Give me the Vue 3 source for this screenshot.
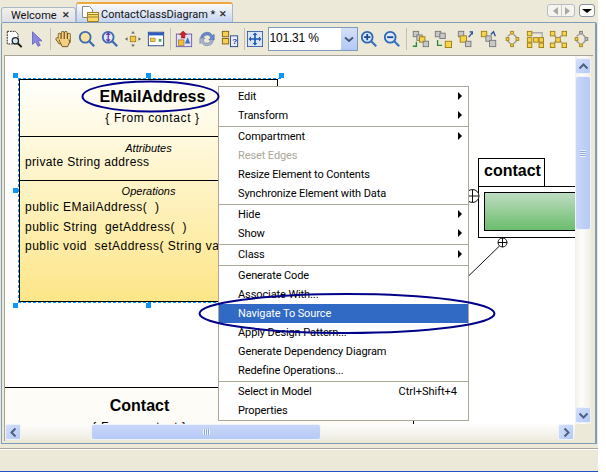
<template>
  <div class="shot">
    <div class="app">
      <div class="tabbar">
        <div class="tab">
          <span>Welcome</span>
          <span class="tab-x">✕</span>
        </div>
        <div class="tab active">
          <svg class="tab-icon" width="20" height="18" viewBox="0 0 20 18">
            <path d="M1.5 1.5h7l3 3v8h-10z" fill="#fff" stroke="#8a8a8a" />
            <path d="M6.5 7.5h11v9h-11z" fill="#f8d860" stroke="#a08020" />
            <path d="M6.5 7.5h11v2h-11zM7 12h10" fill="#fcf0b0" stroke="#a08020" />
          </svg>
          <span>ContactClassDiagram *</span>
          <span class="tab-x">✕</span>
        </div>
        <div class="tab-tools">
          <div class="nav-btn">
            <i class="tri-left"></i>
            <b></b>
            <i class="tri-right"></i>
          </div>
          <div class="drop-btn"><i></i></div>
        </div>
      </div>

      <div class="panel">
        <div class="toolbar">
          <svg class="tool" viewBox="0 0 20 20">
            <path d="M2.500 1.500h9l3 3v11h-12z" fill="#fff" stroke="#111" stroke-dasharray="2 1" />
            <circle cx="11.500" cy="12" r="3.500" fill="#cfe4f7" stroke="#222" stroke-width="1.400" />
            <path d="M14.500 15l4 4" stroke="#111" stroke-width="2" />
          </svg>
          <svg class="tool" viewBox="0 0 20 20">
            <path d="M5 2v14l3.500-3 2.500 5 2.500-1-2.500-5h4.500z" fill="#8c88e0" stroke="#6a66c0" />
          </svg>
          <span class="tsep first"></span>
          <svg class="tool" viewBox="0 0 20 20">
            <g fill="none" stroke-linecap="round">
              <g stroke="#6a4a18" stroke-width="3.800">
                <path d="M5 5v7M8.500 3v8M12 3v8M15.500 5v8M2.500 10l3 4" />
              </g>
              <g stroke="#f4d083" stroke-width="2.200">
                <path d="M5 5v7M8.500 3v8M12 3v8M15.500 5v8M2.500 10l3 4" />
              </g>
            </g>
            <path d="M4.500 11h11.500v3l-2 4.500H8z" fill="#f4d083" stroke="#6a4a18" />
            <path d="M5 10h10v3H6z" fill="#f4d083" />
          </svg>
          <svg class="tool" viewBox="0 0 20 20">
            <circle cx="8" cy="8" r="6" fill="#f8e0a0" stroke="#3a6ab0" stroke-width="2" />
            <path d="M12.500 12.500l5.500 5.500" stroke="#3a6ab0" stroke-width="2.500" />
          </svg>
          <svg class="tool" viewBox="0 0 20 20">
            <circle cx="8" cy="8" r="6" fill="#dfe8fa" stroke="#3a6ab0" stroke-width="2" />
            <path d="M8 3.500v9M6 5.500l2-2 2 2M6 10.500l2 2 2-2" fill="none" stroke="#6a2aa0" stroke-width="1.300" />
            <path d="M12.500 12.500l5.500 5.500" stroke="#3a6ab0" stroke-width="2.500" />
          </svg>
          <svg class="tool" viewBox="0 0 20 20">
            <rect x="7" y="7" width="6" height="6" fill="#f5c842" stroke="#a08020" />
            <path d="M10 1l2 3H8zM10 19l-2-3h4zM1 10l3-2v4zM19 10l-3 2V8z" fill="#666" />
          </svg>
          <svg class="tool" viewBox="0 0 20 20">
            <rect x="1.500" y="2.500" width="17" height="15" fill="#fff" stroke="#26408c" />
            <rect x="2" y="3" width="16" height="3" fill="#2a5ac0" />
            <rect x="4" y="9" width="5" height="4" fill="#f5d040" stroke="#806010" stroke-width=".6" />
            <rect x="13" y="10" width="3" height="3" fill="#50a050" />
          </svg>
          <span class="tsep"></span>
          <svg class="tool" viewBox="0 0 20 20">
            <rect x="1.500" y="4.500" width="17" height="14" fill="#e6e0f5" stroke="#6a58b0" />
            <path d="M9 1l4 4h-2v4H7V5H5z" fill="#d02020" stroke="#801010" stroke-width=".5" />
            <rect x="4" y="11" width="6" height="6" fill="#f0c030" stroke="#806010" stroke-width=".6" />
            <path d="M14 8l3 7h-6z" fill="#3a70c8" />
          </svg>
          <svg class="tool" viewBox="0 0 20 20">
            <path d="M3 9a7 7 0 0 1 13-3l2-1v6h-6l2-2a4 4 0 0 0-8 1z" fill="#6a8ad0" stroke="#3a5a9a" stroke-width=".6" />
            <path d="M17 11a7 7 0 0 1-13 3l-2 1V9h6l-2 2a4 4 0 0 0 8-1z" fill="#a8b4cc" stroke="#707c9c" stroke-width=".6" />
          </svg>
          <svg class="tool" viewBox="0 0 20 20">
            <rect x="1.500" y="1.500" width="7" height="6" fill="#f3d050" stroke="#806010" />
            <rect x="1.500" y="9.500" width="7" height="6" fill="#f3d050" stroke="#806010" />
            <rect x="10.500" y="6.500" width="8" height="12" fill="#e8eefc" stroke="#26408c" />
            <text class="help-mark" x="12.500" y="16">?</text>
          </svg>
          <span class="tsep"></span>
          <svg class="tool fit" viewBox="0 0 20 20">
            <rect x=".5" y=".5" width="19" height="19" fill="#dbe6fa" stroke="#26509c" />
            <path d="M10 2l3 3h-2v4h4V7l3 3-3 3v-2h-4v4h2l-3 3-3-3h2v-4H5v2l-3-3 3-3v2h4V5H7z" fill="#1a58b0" />
          </svg>
          <div class="combo">
            <span class="combo-value">101.31 %</span>
            <span class="combo-btn"><svg width="10" height="7" viewBox="0 0 10 7"><path d="M1 1.500l4 3.500 4-3.500" fill="none" stroke="#44587c" stroke-width="2" /></svg></span>
          </div>
          <svg class="tool" viewBox="0 0 20 20">
            <circle cx="8" cy="8" r="6" fill="#dce8fb" stroke="#2a68b8" stroke-width="2" />
            <path d="M4.500 8h7M8 4.500v7" stroke="#1a4a9a" stroke-width="2" />
            <path d="M12.500 12.500l5.500 5.500" stroke="#3a74c0" stroke-width="2.500" />
          </svg>
          <svg class="tool" viewBox="0 0 20 20">
            <circle cx="8" cy="8" r="6" fill="#dce8fb" stroke="#2a68b8" stroke-width="2" />
            <path d="M4.500 8h7" stroke="#1a4a9a" stroke-width="2" />
            <path d="M12.500 12.500l5.500 5.500" stroke="#3a74c0" stroke-width="2.500" />
          </svg>
          <span class="tsep"></span>
          <svg v-for="(icon, i) in layoutIcons" :key="i" class="tool" viewBox="0 0 20 20">
            <path v-if="icon.arrow" :d="icon.arrow" fill="none" :stroke="icon.arrowColor" stroke-width="1.500" />
            <rect
              v-for="(b, j) in icon.boxes"
              :key="j"
              :x="b[0] + 0.5"
              :y="b[1] + 0.5"
              :width="b[2]"
              :height="b[2]"
              :fill="b[3]"
              :stroke="b[3] === '#f6d44c' ? '#a07c10' : '#777'"
            />
          </svg>
        </div>

        <div class="workspace">
          <div class="canvas">
            <div class="class-box">
              <div class="class-head">
                <div class="class-name">EMailAddress</div>
                <div class="class-from">{ From contact }</div>
              </div>
              <div class="class-attrs">
                <div class="comp-title">Attributes</div>
                <div class="member attr">private String address</div>
              </div>
              <div class="class-ops">
                <div class="comp-title">Operations</div>
                <div class="member">public EMailAddress(&nbsp; )</div>
                <div class="member">public String&nbsp; getAddress(&nbsp; )</div>
                <div class="member">public void&nbsp; setAddress( String value )</div>
              </div>
            </div>
            <div class="selection"></div>
            <span v-for="(h, i) in handles" :key="i" class="handle" :style="{ left: h[0] + 'px', top: h[1] + 'px' }"></span>

            <div class="contact-box">
              <div class="contact-name">Contact</div>
              <div class="class-from">{ From contact }</div>
            </div>

            <div class="package">
              <div class="package-tab">contact</div>
              <div class="package-body"><div class="package-fill"></div></div>
            </div>
            <svg class="wires" width="570" height="368" viewBox="0 0 570 368">
              <circle cx="467.500" cy="140" r="6.500" fill="#fff" stroke="#111" />
              <path d="M461 140h13M467.500 133.500v13" fill="none" stroke="#111" />
              <circle cx="497.500" cy="186.500" r="4.500" fill="#fff" stroke="#111" />
              <path d="M493 186.500h9M497.500 182v9M494.500 190l-32 31" fill="none" stroke="#111" />
            </svg>
          </div>

          <div class="vscroll">
            <span class="sb-btn"><svg width="11" height="7" viewBox="0 0 11 7"><path d="M1.500 5.500l4-4 4 4" fill="none" stroke="#4d6185" stroke-width="2" /></svg></span>
            <span class="v-thumb"><i></i></span>
            <span class="sb-btn down"><svg width="11" height="7" viewBox="0 0 11 7"><path d="M1.500 1.500l4 4 4-4" fill="none" stroke="#4d6185" stroke-width="2" /></svg></span>
          </div>
          <div class="hscroll">
            <span class="sb-btn"><svg width="7" height="11" viewBox="0 0 7 11"><path d="M5.500 1.500l-4 4 4 4" fill="none" stroke="#4d6185" stroke-width="2" /></svg></span>
            <span class="h-thumb"><i></i></span>
            <span class="sb-btn right"><svg width="7" height="11" viewBox="0 0 7 11"><path d="M1.500 1.500l4 4-4 4" fill="none" stroke="#4d6185" stroke-width="2" /></svg></span>
          </div>
          <div class="corner"></div>
        </div>
      </div>

      <div class="statusbar"></div>

      <div class="menu">
        <template v-for="(group, g) in menuGroups" :key="g">
          <div v-if="g > 0" class="menu-sep"></div>
          <div
            v-for="item in group"
            :key="item.label"
            class="menu-item"
            :class="{ disabled: item.disabled, selected: item.selected }"
          >
            <span>{{ item.label }}</span>
            <span v-if="item.shortcut" class="shortcut">{{ item.shortcut }}</span>
            <i v-if="item.sub" class="submenu-arrow"></i>
          </div>
        </template>
      </div>

      <svg class="marks" width="598" height="472" viewBox="0 0 598 472">
        <ellipse cx="150.500" cy="96.500" rx="68" ry="15" />
        <ellipse cx="347" cy="313.500" rx="147.500" ry="19.500" />
      </svg>
    </div>
  </div>
</template>

<script setup>
const menuGroups = [
  [
    { label: 'Edit', sub: true },
    { label: 'Transform', sub: true },
  ],
  [
    { label: 'Compartment', sub: true },
    { label: 'Reset Edges', disabled: true },
    { label: 'Resize Element to Contents' },
    { label: 'Synchronize Element with Data' },
  ],
  [
    { label: 'Hide', sub: true },
    { label: 'Show', sub: true },
  ],
  [{ label: 'Class', sub: true }],
  [
    { label: 'Generate Code' },
    { label: 'Associate With...' },
    { label: 'Navigate To Source', selected: true },
    { label: 'Apply Design Pattern...' },
    { label: 'Generate Dependency Diagram' },
    { label: 'Redefine Operations...' },
  ],
  [
    { label: 'Select in Model', shortcut: 'Ctrl+Shift+4' },
    { label: 'Properties' },
  ],
]

// handles are relative to the canvas
const handles = [
  [8, 17],
  [141, 17],
  [274, 17],
  [8, 132],
  [8, 247],
  [141, 247],
]

const Y = '#f6d44c'
const G = '#c8c8c8'
const layoutIcons = [
  { boxes: [[2, 1, 6, G], [6, 5, 6, G], [9, 7, 6, Y], [13, 12, 6, G]], arrow: 'M2 18h4V13', arrowColor: '#2c8a3c' },
  { boxes: [[1, 1, 6, G], [6, 3, 6, G], [12, 12, 7, Y]], arrow: 'M4 11v6h5', arrowColor: '#2c8a3c' },
  { boxes: [[1, 1, 6, G], [3, 6, 7, Y], [9, 12, 6, G]], arrow: 'M13 8l4-5M14 2h3v3', arrowColor: '#2050a0' },
  { boxes: [[1, 1, 6, Y], [6, 6, 6, G], [10, 11, 7, G]], arrow: 'M12 5l3-3 2 5', arrowColor: '#2050a0' },
  { boxes: [[8, 1, 3, Y], [3, 8, 3, Y], [14, 8, 3, Y], [8, 15, 3, Y]], arrow: 'M8 5L5 7M12 5l3 3M5 12l3 3M15 12l-3 3', arrowColor: '#999' },
  { boxes: [[1, 1, 5, Y], [1, 8, 5, Y], [1, 14, 5, Y], [8, 8, 5, Y], [14, 8, 5, Y], [14, 14, 5, Y]], arrow: 'M3 3h15v15', arrowColor: '#aaa' },
  { boxes: [[1, 1, 5, Y], [14, 1, 5, Y], [7, 8, 5, Y], [1, 14, 5, Y], [14, 14, 5, Y]], arrow: 'M6 6l2 2M14 6l-2 2M6 14l2-2M14 14l-2-2', arrowColor: '#999' },
  { boxes: [[8, 1, 3, G], [3, 8, 3, Y], [14, 8, 3, G], [8, 15, 3, Y]], arrow: 'M8 5L5 7M12 5l3 3M5 12l3 3M15 12l-3 3', arrowColor: '#999' },
]
</script>

<style>
html,
body {
  margin: 0;
  background: #fff;
}
</style>

<style scoped>
.shot {
  width: 606px;
  height: 472px;
  overflow: hidden;
  background: #fff;
}

.app {
  position: relative;
  width: 598px;
  height: 472px;
  background: #ece9d8;
  display: flex;
  flex-direction: column;
  font-family: "Roboto", "Noto Sans", sans-serif;
  font-size: 11px;
  color: #000;
  overflow: hidden;
}

.tabbar {
  height: 22px;
  display: flex;
  align-items: flex-end;
  padding-left: 1px;
  flex-shrink: 0;
}

.tab {
  width: 75px;
  height: 15px;
  box-sizing: border-box;
  display: flex;
  align-items: center;
  padding: 0 5px 0 9px;
  justify-content: space-between;
  border: 1px solid #a9b7c9;
  border-bottom: 0;
  border-radius: 3px 3px 0 0;
  background: linear-gradient(#f2f1ea, #dcdfe8);
  color: #111;
  white-space: nowrap;
}

.tab.active {
  width: 157px;
  height: 20px;
  padding: 2px 5px 0 4px;
  border-top: 2px solid #f0a83c;
  background: linear-gradient(#fbfbf8, #c4d4f3);
  justify-content: flex-start;
}

.tab.active .tab-x {
  margin-left: auto;
}

.tab-icon {
  flex-shrink: 0;
}

.tab-x {
  font-size: 9px;
  color: #333;
  font-weight: 700;
}

.tab-tools {
  margin-left: auto;
  display: flex;
  gap: 4px;
  align-self: flex-start;
  padding: 4px 3px 0 0;
}

.nav-btn,
.drop-btn {
  height: 13px;
  box-sizing: border-box;
  border: 1px solid #b8bcc4;
  border-radius: 3px;
  background: #f5f4ee;
  display: flex;
  align-items: center;
  justify-content: center;
}

.nav-btn {
  width: 28px;
  gap: 3px;
}

.nav-btn b {
  width: 1px;
  height: 11px;
  background: #c8c8c8;
}

.tri-left {
  border: 4px solid transparent;
  border-left: 0;
  border-right: 5px solid #a8a8a0;
}

.tri-right {
  border: 4px solid transparent;
  border-right: 0;
  border-left: 5px solid #a8a8a0;
}

.drop-btn {
  width: 16px;
  background: #fbfbf8;
  border-color: #8c94a0;
}

.drop-btn i {
  border: 4px solid transparent;
  border-bottom: 0;
  border-top: 4px solid #000;
  border-left-width: 5px;
  border-right-width: 5px;
}

.panel {
  margin: 0 1px;
  width: 596px;
  height: 422px;
  box-sizing: border-box;
  border: 1px solid #7f9db9;
  border-right-width: 2px;
  border-radius: 2px 2px 0 0;
  padding: 0 3px 2px 2px;
  display: flex;
  flex-direction: column;
  flex-shrink: 0;
}

.toolbar {
  height: 32px;
  display: flex;
  align-items: center;
  flex-shrink: 0;
  margin-left: -1.500px;
}

.tool {
  width: 18px;
  height: 18px;
  margin: 0 2.500px;
  flex-shrink: 0;
}

.tool.fit {
  width: 16px;
  height: 16px;
  margin: 0 3.500px 0 0.500px;
}

.help-mark {
  font-size: 9px;
  font-weight: 700;
  fill: #26408c;
  font-family: "Liberation Sans", sans-serif;
}

.tsep {
  width: 1px;
  height: 22px;
  background: #c4c1b2;
  margin: 0 2px;
  flex-shrink: 0;
}

.tsep.first {
  margin-left: 1px;
}

.combo {
  width: 90px;
  height: 24px;
  box-sizing: border-box;
  margin-left: 1px;
  border: 1px solid #7f9db9;
  background: #fff;
  display: flex;
  align-items: stretch;
  flex-shrink: 0;
  font-family: "Liberation Sans", sans-serif;
  font-size: 12px;
  letter-spacing: -0.200px;
}

.combo-value {
  flex: 1;
  padding-left: 1px;
  line-height: 21px;
}

.combo-btn {
  width: 16px;
  background: linear-gradient(#d4e0fa, #b2c8f6);
  display: flex;
  align-items: center;
  justify-content: center;
}

.workspace {
  flex: 1;
  display: grid;
  grid-template-columns: 570px 16px;
  grid-template-rows: 368px 16px;
  border-top: 1px solid #a7a59a;
  border-left: 1px solid #a7a59a;
  min-height: 0;
  width: 588px;
}

.canvas {
  position: relative;
  background: #fff;
  overflow: hidden;
}

.class-box {
  position: absolute;
  left: 14px;
  top: 23px;
  width: 259px;
  height: 223px;
  box-sizing: border-box;
  border: 1px solid #000;
  background: linear-gradient(#fffffc, #fde688);
  font-family: "Liberation Sans", sans-serif;
  font-size: 12px;
}

.selection {
  position: absolute;
  left: 13px;
  top: 22px;
  width: 263px;
  height: 225px;
  box-sizing: border-box;
  border: 1px dashed #0a96fa;
  border-right: 0;
}

.class-head {
  height: 57px;
  box-sizing: border-box;
  border-bottom: 1px solid #000;
  text-align: center;
  padding: 7px 0 0 8px;
}

.class-name {
  font-size: 16px;
  font-weight: 700;
  line-height: 19px;
}

.class-from {
  font-size: 12px;
  line-height: 14px;
  letter-spacing: 0.600px;
  margin-top: 5px;
}

.class-attrs {
  height: 44px;
  box-sizing: border-box;
  border-bottom: 1px solid #000;
  padding: 5px 5px 0;
}

.class-ops {
  padding: 4px 5px 0;
}

.comp-title {
  font-size: 11px;
  font-style: italic;
  text-align: center;
  line-height: 13px;
}

.member {
  line-height: 19.500px;
  letter-spacing: 0.480px;
  white-space: nowrap;
  overflow: hidden;
}

.member.attr {
  margin-top: -2px;
  letter-spacing: 0.350px;
}

.handle {
  position: absolute;
  width: 5px;
  height: 5px;
  background: #0a96fa;
}

.contact-box {
  position: absolute;
  left: 0;
  top: 331px;
  width: 409px;
  height: 60px;
  border-top: 1px solid #000;
  border-right: 1px solid #000;
  background: #fdfcf6;
  font-family: "Liberation Sans", sans-serif;
  text-align: center;
  padding: 9px 139px 0 0;
  box-sizing: border-box;
}

.contact-name {
  font-size: 16px;
  font-weight: 700;
  line-height: 18px;
}

.package {
  position: absolute;
  left: 473px;
  top: 102px;
  font-family: "Liberation Sans", sans-serif;
}

.package-tab {
  width: 67px;
  height: 28px;
  box-sizing: border-box;
  border: 1px solid #000;
  border-bottom: 0;
  background: #fff;
  font-size: 16px;
  font-weight: 700;
  padding: 2px 0 0 5px;
  line-height: 20px;
}

.package-body {
  width: 110px;
  height: 52px;
  box-sizing: border-box;
  border: 1px solid #000;
  background: #fff;
  padding: 5px;
}

.package-fill {
  height: 39px;
  box-sizing: border-box;
  border: 1px solid #000;
  background: linear-gradient(#bedcc2, #6bbd6c);
}

.wires {
  position: absolute;
  left: 0;
  top: 0;
}

.vscroll {
  background: linear-gradient(90deg, #f3f1ea, #fdfdfb 40%, #f0eee4);
  display: flex;
  flex-direction: column;
  align-items: center;
  padding-top: 2px;
}

.hscroll {
  background: linear-gradient(#fdfdfb, #f3f1ea 70%, #eeecdf);
  display: flex;
  align-items: center;
}

.corner {
  background: #ece9d8;
}

.sb-btn {
  width: 16px;
  height: 16px;
  box-sizing: border-box;
  border: 1px solid #eef2fb;
  border-radius: 2px;
  background: linear-gradient(135deg, #d4e0fa, #b6caf6);
  display: flex;
  align-items: center;
  justify-content: center;
  flex-shrink: 0;
}

.sb-btn.down {
  margin-top: auto;
  margin-bottom: 1px;
}

.sb-btn.right {
  margin-left: auto;
  margin-right: 1px;
}

.v-thumb,
.h-thumb {
  box-sizing: border-box;
  border: 1px solid #eef2fb;
  border-radius: 3px;
  display: flex;
  align-items: center;
  justify-content: center;
  flex-shrink: 0;
}

.v-thumb {
  width: 16px;
  height: 154px;
  margin-top: 2px;
  background: linear-gradient(90deg, #c8d6f8, #b6caf6);
}

.h-thumb {
  width: 230px;
  height: 16px;
  margin-left: 70px;
  background: linear-gradient(#c8d6f8, #b6caf6);
}

.v-thumb i {
  width: 6px;
  height: 7px;
  background: repeating-linear-gradient(#eef2fb 0 1px, #8fa8dc 1px 2px);
}

.h-thumb i {
  width: 7px;
  height: 6px;
  background: repeating-linear-gradient(90deg, #eef2fb 0 1px, #8fa8dc 1px 2px);
}

.statusbar {
  margin-top: 4px;
  flex: 1;
  border-top: 1px solid #aca899;
  box-shadow: inset 0 1px 0 #fff;
  border-bottom: 1px solid #2050c8;
}

.menu {
  position: absolute;
  left: 218px;
  top: 86px;
  width: 251px;
  box-sizing: border-box;
  border: 1px solid #aca899;
  background: #fff;
}

.menu-item {
  height: 19px;
  box-sizing: border-box;
  padding: 0 8px 0 19px;
  display: flex;
  align-items: center;
  position: relative;
  color: #000;
  white-space: nowrap;
  letter-spacing: -0.100px;
}

.menu-item.disabled {
  color: #aca899;
}

.menu-item.selected {
  background: #316ac5;
  color: #fff;
}

.shortcut {
  margin-left: auto;
  margin-right: 3px;
  letter-spacing: 0;
}

.submenu-arrow {
  position: absolute;
  right: 6px;
  top: 5px;
  border: 4px solid transparent;
  border-right: 0;
  border-left: 4px solid #000;
}

.menu-sep {
  height: 1px;
  margin-top: 1px;
  background: #aca899;
}

.marks {
  position: absolute;
  left: 0;
  top: 0;
  pointer-events: none;
}

.marks ellipse {
  fill: none;
  stroke: #00008b;
  stroke-width: 2;
}
</style>
